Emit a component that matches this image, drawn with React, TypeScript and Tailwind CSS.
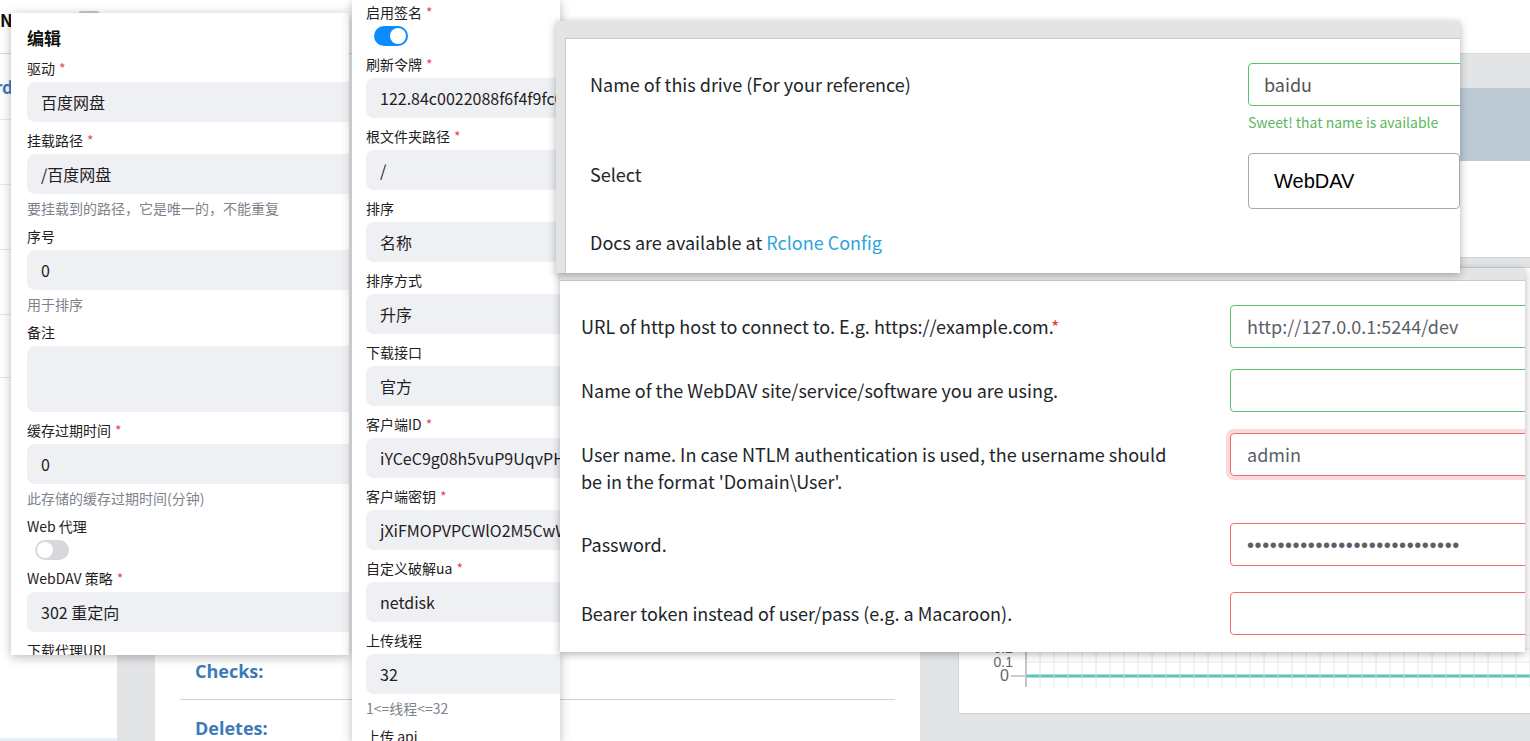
import type { ReactNode } from 'react';

const Req = () => <span className="ml-1 text-[#e5484d]">*</span>;

const Label = ({ text, req }: { text: string; req?: boolean }) => (
  <div className="h-5 whitespace-nowrap text-[14px] leading-5 text-[#1f2023]">
    {text}
    {req && <Req />}
  </div>
);

const Box = ({ children, tall }: { children?: ReactNode; tall?: boolean }) => (
  <div
    className={`${tall ? 'h-[66px]' : 'h-10'} flex w-[420px] shrink-0 items-center whitespace-nowrap rounded-lg bg-[#eff0f3] px-[14px] text-[16px] text-[#1f2023]`}
  >
    {children}
  </div>
);

const Hint = ({ text }: { text: string }) => (
  <div className="h-5 whitespace-nowrap text-[14px] leading-5 text-[#7e838b]">{text}</div>
);

const Toggle = ({ on }: { on?: boolean }) => (
  <div
    className={`ml-2 flex h-5 w-[34px] items-center rounded-full px-[2px] ${on ? 'justify-end bg-[#0a8bfe]' : 'justify-start bg-[#d6d8dc]'}`}
  >
    <div className="h-4 w-4 rounded-full bg-white" />
  </div>
);

const Field = ({ label, req, value, hint, tall }: { label: string; req?: boolean; value?: string; hint?: string; tall?: boolean }) => (
  <div className="flex flex-col gap-1">
    <Label text={label} req={req} />
    <Box tall={tall}>{value}</Box>
    {hint && <Hint text={hint} />}
  </div>
);

const EditPanel = () => (
  <div className="absolute left-[11px] top-[13px] z-10 flex h-[642px] w-[338px] flex-col gap-2 overflow-hidden bg-white pl-4 pt-[13px] shadow-[0_2px_10px_rgba(0,0,0,0.28)]">
    <div className="h-6 text-[17px] font-bold leading-6 text-[#111]">编辑</div>
    <Field label="驱动" req value="百度网盘" />
    <Field label="挂载路径" req value="/百度网盘" hint="要挂载到的路径，它是唯一的，不能重复" />
    <Field label="序号" value="0" hint="用于排序" />
    <Field label="备注" tall />
    <Field label="缓存过期时间" req value="0" hint="此存储的缓存过期时间(分钟)" />
    <div className="flex flex-col gap-1">
      <Label text="Web 代理" />
      <Toggle />
    </div>
    <Field label="WebDAV 策略" req value="302 重定向" />
    <Label text="下载代理URL" />
  </div>
);

const DriverPanel = () => (
  <div className="absolute left-[352px] top-0 z-20 flex h-[741px] w-[208px] flex-col gap-2 overflow-hidden bg-white pl-[14px] pt-[2px] shadow-[0_2px_10px_rgba(0,0,0,0.28)]">
    <div className="flex flex-col gap-1">
      <Label text="启用签名" req />
      <Toggle on />
    </div>
    <Field label="刷新令牌" req value="122.84c0022088f6f4f9fc0" />
    <Field label="根文件夹路径" req value="/" />
    <Field label="排序" value="名称" />
    <Field label="排序方式" value="升序" />
    <Field label="下载接口" value="官方" />
    <Field label="客户端ID" req value="iYCeC9g08h5vuP9UqvPHK" />
    <Field label="客户端密钥" req value="jXiFMOPVPCWlO2M5CwW" />
    <Field label="自定义破解ua" req value="netdisk" />
    <Field label="上传线程" value="32" hint="1<=线程<=32" />
    <Label text="上传 api" />
  </div>
);

const NewRemotePanel = () => (
  <div className="absolute left-[556px] top-[21px] z-40 flex h-[252px] w-[904px] bg-[#e3e4e6] pl-[9px] pt-[17px] shadow-[0_2px_8px_rgba(0,0,0,0.3)]">
    <div className="flex-1 overflow-hidden border-l border-t border-[#c8c9cc] bg-white pl-6 pt-6 text-[18px] text-[#212529]">
      <div className="flex">
        <div className="flex h-[43px] w-[658px] shrink-0 items-center">Name of this drive (For your reference)</div>
        <div className="flex flex-col">
          <div className="flex h-[43px] w-[300px] items-center rounded-[4px] border border-[#57c173] pl-[15px] text-[#555]">baidu</div>
          <div className="mt-2 whitespace-nowrap text-[14px] leading-4 text-[#5cb85c]">Sweet! that name is available</div>
        </div>
      </div>
      <div className="mt-[23px] flex">
        <div className="w-[658px] shrink-0 pt-2 leading-[27px]">Select</div>
        <div className="flex h-14 w-[300px] items-center rounded-[4px] border border-[#aaa] pl-[25px] font-['Liberation_Sans',sans-serif] text-[20px] text-black">
          WebDAV
        </div>
      </div>
      <div className="mt-5 leading-[27px]">
        Docs are available at <span className="text-[#2fa4dc]">Rclone Config</span>
      </div>
    </div>
  </div>
);

const Row = ({ label, children, mt, border, glow }: { label: ReactNode; children?: ReactNode; mt: string; border: string; glow?: boolean }) => (
  <div className={`flex items-start ${mt}`}>
    <div className="w-[649px] shrink-0 pr-10 pt-2 leading-[27px]">{label}</div>
    <div
      className={`flex h-[43px] w-[320px] shrink-0 items-center rounded-[4px] border pl-4 text-[#5b6068] ${border} ${glow ? 'shadow-[0_0_0_4px_#fddada]' : ''}`}
    >
      {children}
    </div>
  </div>
);

const WebdavPanel = () => (
  <div className="absolute left-[560px] top-[268px] z-30 flex h-[384px] w-[965px] flex-col bg-[#e3e4e6] pt-3 shadow-[0_2px_8px_rgba(0,0,0,0.3)]">
    <div className="flex-1 overflow-hidden border-t border-[#c8c9cc] bg-white pl-[21px] pt-6 text-[18px] text-[#212529]">
      <Row
        mt="mt-0"
        border="border-[#57c173]"
        label={
          <>
            URL of http host to connect to. E.g. https://example.com.<span className="text-[#e53935]">*</span>
          </>
        }
      >
        http://127.0.0.1:5244/dev
      </Row>
      <Row mt="mt-[21px]" border="border-[#57c173]" label="Name of the WebDAV site/service/software you are using." />
      <Row
        mt="mt-[21px]"
        border="border-[#f26b6b]"
        glow
        label="User name. In case NTLM authentication is used, the username should be in the format 'Domain\User'."
      >
        admin
      </Row>
      <Row mt="mt-[28px]" border="border-[#f26b6b]" label="Password.">
        <span className="font-['Liberation_Sans',sans-serif] text-[20px] tracking-[0.6px] text-[#5b6068]">
          {'•'.repeat(28)}
        </span>
      </Row>
      <Row mt="mt-[26px]" border="border-[#f26b6b]" label="Bearer token instead of user/pass (e.g. a Macaroon)." />
    </div>
  </div>
);

const Chart = () => {
  const xs = Array.from({ length: 37 }, (_, i) => 67 + i * 14);
  return (
    <svg width="572" height="100" className="mb-[14px] block">
      {xs.map((x) => (
        <line key={x} x1={x} y1={0} x2={x} y2={88} stroke="#e6e6e6" strokeWidth="1" />
      ))}
      {[36, 50, 63].map((y) => (
        <line key={y} x1={67} y1={y} x2={572} y2={y} stroke="#e6e6e6" strokeWidth="1" />
      ))}
      <line x1={67} y1={0} x2={67} y2={88} stroke="#999" strokeWidth="1" />
      <line x1={52} y1={77} x2={67} y2={77} stroke="#999" strokeWidth="1" />
      <text x="54" y="54" textAnchor="end" fontSize="14" fill="#666" fontFamily="Liberation Sans, sans-serif">0.2</text>
      <text x="54" y="68" textAnchor="end" fontSize="14" fill="#666" fontFamily="Liberation Sans, sans-serif">0.1</text>
      <text x="50" y="82" textAnchor="end" fontSize="16" fill="#666" fontFamily="Liberation Sans, sans-serif">0</text>
      <line x1={67} y1={77} x2={572} y2={77} stroke="#5bc4bf" strokeWidth="3" />
      {xs.map((x) => (
        <circle key={`d${x}`} cx={x} cy={77} r="0.8" fill="#d7f0ef" />
      ))}
    </svg>
  );
};

const Background = () => (
  <div className="absolute inset-0 flex flex-col bg-[#e3e4e6]">
    <div className="flex h-[54px] shrink-0 items-start border-b border-[#d6d8db] bg-white">
      <div className="mt-[10px] text-[17px] font-bold leading-5 text-[#111]">NI</div>
      <div className="ml-[60px] mt-[11px] h-3 w-[22px] rounded-sm bg-[#c5cbd3]" />
    </div>
    <div className="flex min-h-0 flex-1">
      <div className="flex w-[117px] shrink-0 flex-col bg-white">
        <div className="flex h-[66px] items-center border-b border-[#e4e7eb] text-[17px] font-bold text-[#3d7ab8]">
          <span className="-ml-[78px]">Dashboard</span>
        </div>
        <div className="h-[65px] border-b border-[#e4e7eb]" />
        <div className="h-[65px] border-b border-[#e4e7eb]" />
        <div className="h-[65px] border-b border-[#e4e7eb]" />
        <div className="h-[63px] border-b border-[#e4e7eb]" />
        <div className="flex-1 border-b-[3px] border-[#e8eef5]" />
      </div>
      <div className="w-[38px] shrink-0" />
      <div className="flex w-[765px] shrink-0 flex-col justify-end bg-white px-[25px] font-['Open_Sans',sans-serif] text-[18px] font-bold text-[#3d7ab8]">
        <div className="flex h-14 items-center border-b border-[#cfd2d6] pl-[15px]">Checks:</div>
        <div className="h-[41px] pl-[15px] pt-4 leading-6">Deletes:</div>
      </div>
      <div className="w-[38px] shrink-0" />
      <div className="flex flex-1 flex-col">
        <div className="h-[34px] shrink-0" />
        <div className="h-[73px] shrink-0 bg-[#bccad6]" />
        <div className="h-[97px] shrink-0 border-b border-[#cfd2d6] bg-white" />
        <div className="h-[9px] shrink-0" />
        <div className="flex flex-1 flex-col justify-end border border-[#cfd3d8] bg-white">
          <Chart />
        </div>
        <div className="h-[27px] shrink-0" />
      </div>
    </div>
  </div>
);

export default function App() {
  return (
    <div className="relative h-[741px] w-[1530px] overflow-hidden font-['Noto_Sans_CJK_SC','Noto_Sans',sans-serif]">
      <Background />
      <EditPanel />
      <DriverPanel />
      <WebdavPanel />
      <NewRemotePanel />
    </div>
  );
}
